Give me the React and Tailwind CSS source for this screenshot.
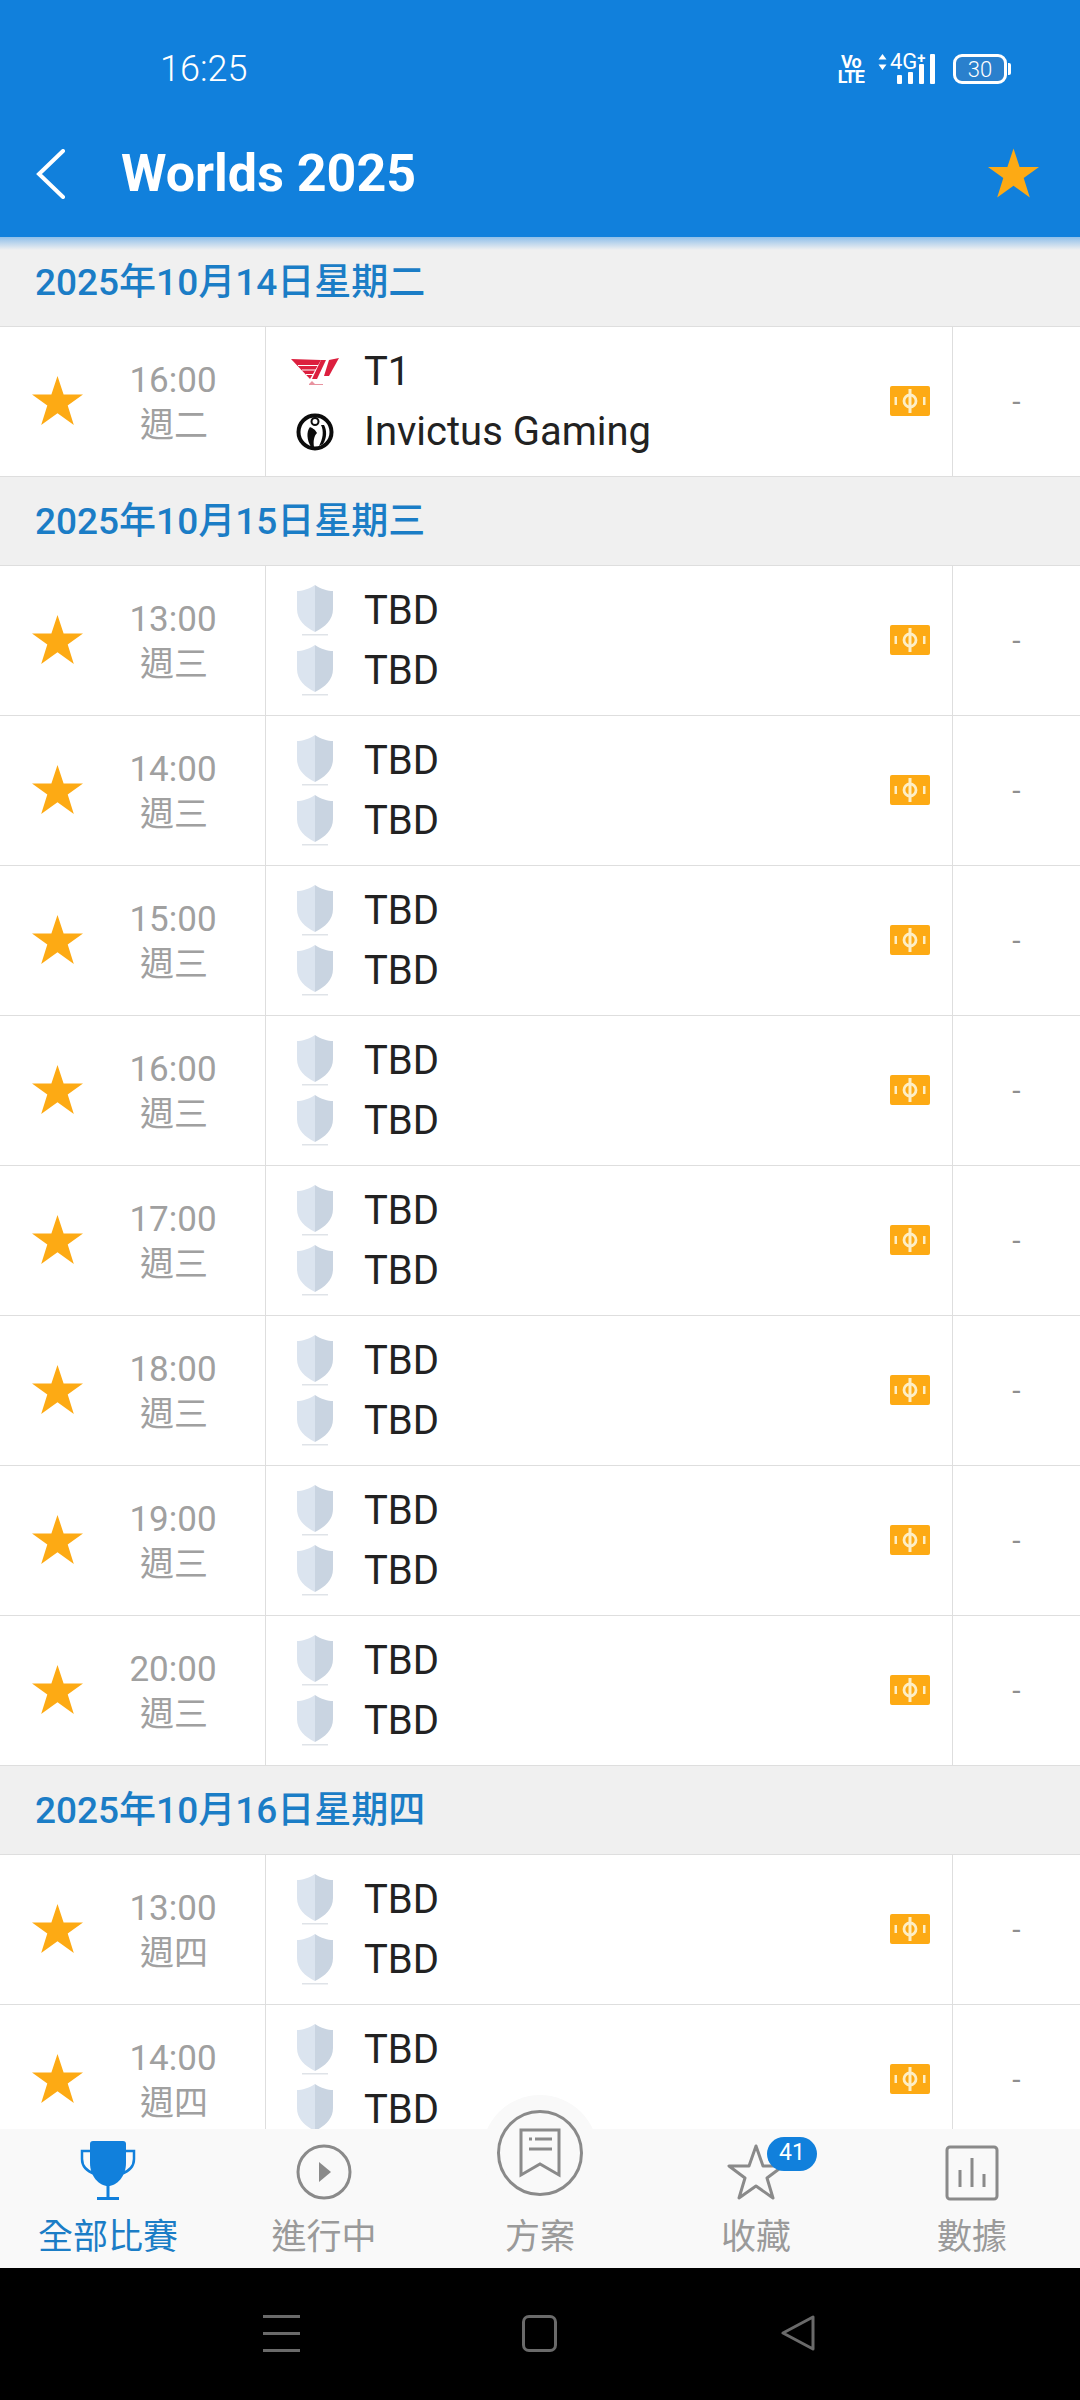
import React from 'react';

const FONT = "font-['Roboto','Noto_Sans_CJK_TC','Noto_Sans',sans-serif]";

// star used for favourites and the header
const Star = ({ className }) => (
  <svg viewBox="0 0 50 48" className={className}>
    <polygon points="25,0 31,18 50,18 35,29 41,48 25,36.500 9,48 15,29 0,18 19,18" fill="#fdaa14" />
  </svg>
);

const Shield = () => (
  <svg viewBox="0 0 38 52" className="w-[38px] h-[52px]">
    <path d="M19 0 C25 4 32 6 37 6 L37 24 C37 35 29 42 19 47 Z" fill="#c9d4e1" />
    <path d="M19 0 C13 4 6 6 1 6 L1 24 C1 35 9 42 19 47 Z" fill="#dbe4ef" />
    <rect x="6" y="49" width="26" height="1.500" fill="#dfe3e8" />
  </svg>
);

const T1Logo = () => (
  <svg viewBox="0 0 48 28" className="w-[48px] h-[28px]">
    <path d="M0 1 L30 2 L19 21 Z" fill="#dc1f3e" />
    <path d="M7 7.500 L27 7.500 M11 12 L25 12 M15 16.500 L22 16.500" stroke="#ffffff" strokeWidth="1" />
    <path d="M30 2 L35 2 L26 21 L21 21 Z" fill="#dc1f3e" />
    <path d="M38 2 L48 0 L38 18 L33 18 Z" fill="#dc1f3e" />
    <path d="M18 26 L21 23 L24 26 L32 26 L32 27 L18 27 Z" fill="#e8929f" />
  </svg>
);

const IgLogo = () => (
  <svg viewBox="0 0 38 38" className="w-[38px] h-[38px]">
    <circle cx="19" cy="19" r="16.500" fill="#fff" stroke="#0c0c0c" strokeWidth="4" />
    <circle cx="19" cy="8.500" r="3.500" fill="none" stroke="#0c0c0c" strokeWidth="2" />
    <path d="M14 14 C10 19 11 27 15 34 L18 34 C17 28 18 23 21 20 C19 16 16 15 14 14 Z" fill="#0c0c0c" />
    <path d="M25 12 C28 18 27 26 23 33 L27 31 C31 25 31 17 28 12 Z" fill="#0c0c0c" />
  </svg>
);

const Ticket = () => (
  <svg viewBox="0 0 40 30" className="w-[40px] h-[30px]">
    <rect x="0" y="0" width="40" height="30" rx="2" fill="#fdaa14" />
    <circle cx="20" cy="15" r="6" fill="none" stroke="#fdeec6" strokeWidth="2.800" />
    <rect x="18.500" y="3" width="3" height="24" fill="#fdeec6" />
    <rect x="4.500" y="11" width="2.500" height="8" fill="#fdeec6" />
    <rect x="33" y="11" width="2.500" height="8" fill="#fdeec6" />
  </svg>
);

const DateHeader = ({ children }) => (
  <div className="h-[89px] shrink-0 flex items-center pl-[35px] pt-[2px] bg-[#f0f0f0] border-b border-[#dedede] text-[37px] font-medium text-[#1b7dc6]">
    {children}
  </div>
);

const TeamLine = ({ icon, name }) => (
  <div className="h-[60px] flex items-center">
    <div className="w-[98px] flex justify-center">{icon}</div>
    <span className="text-[40px] text-[#222222]">{name}</span>
  </div>
);

const MatchRow = ({ time, day, teams }) => (
  <div className="h-[150px] shrink-0 flex bg-white border-b border-[#dedede]">
    <div className="w-[266px] shrink-0 flex items-center border-r border-[#dedede]">
      <Star className="ml-[32px] w-[51px] h-[49px] -mt-[3px]" />
      <div className="ml-[30px] w-[120px] flex flex-col items-center text-[#a0a0a0] mt-[3px]">
        <span className="text-[35px] leading-[44px]">{time}</span>
        <span className="text-[34px] leading-[44px] ml-[2px]">{day}</span>
      </div>
    </div>
    <div className="flex-1 flex items-center">
      <div className="flex-1 flex flex-col">
        {teams.map((t, i) => (
          <TeamLine key={i} icon={t.icon} name={t.name} />
        ))}
      </div>
      <div className="mr-[22px] -mt-[2px]">
        <Ticket />
      </div>
    </div>
    <div className="w-[128px] shrink-0 flex items-center justify-center border-l border-[#dedede] text-[30px] text-[#8f8f8f]">
      -
    </div>
  </div>
);

const tbd = [
  { icon: <Shield />, name: 'TBD' },
  { icon: <Shield />, name: 'TBD' },
];

const wed = ['13:00', '14:00', '15:00', '16:00', '17:00', '18:00', '19:00', '20:00'];

const StatusBar = () => (
  <div className="h-[100px] pt-[38px] flex items-center text-white">
    <span className="ml-[160px] text-[36px] font-light leading-none">16:25</span>
    <div className="ml-auto mr-[69px] flex items-center">
      <div className="flex flex-col items-center font-bold text-[18px] leading-[15px] tracking-tighter">
        <span>Vo</span>
        <span>LTE</span>
      </div>
      <div className="relative ml-[15px] w-[56px] h-[30px]">
        <svg viewBox="0 0 9 16" className="absolute -left-[1px] top-0 w-[9px] h-[16px]">
          <path d="M4.500 0 L8.500 5.500 L0.500 5.500 Z M4.500 16 L8.500 10.500 L0.500 10.500 Z" fill="#ffffff" />
        </svg>
        <span className="absolute left-[11px] -top-[3px] text-[22px] leading-[22px] whitespace-nowrap">
          4G<sup className="text-[15px] font-bold -top-[6px]">+</sup>
        </span>
        <div className="absolute right-0 bottom-0 flex items-end gap-[6px]">
          <div className="w-[5px] h-[9px] bg-white rounded-[1px]" />
          <div className="w-[5px] h-[12px] bg-white rounded-[1px]" />
          <div className="w-[5px] h-[20px] bg-white rounded-[1px]" />
          <div className="w-[5px] h-[30px] bg-white rounded-[1px]" />
        </div>
      </div>
      <div className="ml-[18px] w-[54px] h-[30px] rounded-[9px] border-[3px] border-white bg-[#2a80cd] flex items-center justify-center text-[22px] font-light">
        30
      </div>
      <div className="ml-[1px] w-[3px] h-[12px] bg-white rounded-r-[2px]" />
    </div>
  </div>
);

const BottomTab = ({ icon, label, className }) => (
  <div className={`flex flex-col items-center ${className}`}>
    <div className="h-[72px] flex items-end justify-center">{icon}</div>
    <span className="mt-[13px] text-[35px] leading-[48px] whitespace-nowrap">{label}</span>
  </div>
);

export default function App() {
  return (
    <div className={`w-[1080px] h-[2400px] flex flex-col overflow-hidden bg-white ${FONT}`}>
      <header className="relative z-20 h-[237px] shrink-0 bg-[#1180dc]">
        <StatusBar />
        <div className="h-[137px] pt-[10px] flex items-center text-white">
          <svg viewBox="0 0 30 50" className="ml-[36px] w-[30px] h-[50px]">
            <path d="M27 2 L3 25 L27 48" fill="none" stroke="#ffffff" strokeWidth="4" strokeLinecap="round" />
          </svg>
          <h1 className="ml-[55px] text-[52px] font-bold">Worlds 2025</h1>
          <Star className="ml-auto mr-[41px] w-[51px] h-[50px] -mt-[2px]" />
        </div>
        <div className="absolute left-0 right-0 top-full h-[13px] bg-gradient-to-b from-[#8fbfe9] to-[#f0f0f0]" />
      </header>

      <main className="flex-1 flex flex-col overflow-hidden pt-[1px] bg-[#f0f0f0]">
        <DateHeader>2025年10月14日星期二</DateHeader>
        <MatchRow
          time="16:00"
          day="週二"
          teams={[
            { icon: <T1Logo />, name: 'T1' },
            { icon: <IgLogo />, name: 'Invictus Gaming' },
          ]}
        />
        <DateHeader>2025年10月15日星期三</DateHeader>
        {wed.map((t) => (
          <MatchRow key={t} time={t} day="週三" teams={tbd} />
        ))}
        <DateHeader>2025年10月16日星期四</DateHeader>
        <MatchRow time="13:00" day="週四" teams={tbd} />
        <MatchRow time="14:00" day="週四" teams={tbd} />
      </main>

      <nav className="relative h-[139px] shrink-0 grid grid-cols-5 bg-[#f9f9f9] text-[#9a9a9a]">
        {/* raised centre button */}
        <div className="absolute left-[482px] -top-[34px] w-[116px] h-[116px] rounded-full bg-[#f9f9f9] flex items-center justify-center">
          <div className="w-[86px] h-[86px] rounded-full border-[3px] border-[#8a8a8a] flex items-center justify-center">
            <svg viewBox="0 0 42 50" className="w-[42px] h-[50px]">
              <path d="M2 2 L40 2 L40 47 L21 36 L2 47 Z" fill="none" stroke="#8a8a8a" strokeWidth="3" />
              <path d="M10 11 L13 11 M16 11 L33 11 M10 21 L33 21" stroke="#8a8a8a" strokeWidth="3" />
            </svg>
          </div>
        </div>

        <BottomTab
          className="text-[#1b7dc6]"
          label="全部比賽"
          icon={
            <svg viewBox="0 0 56 60" className="w-[56px] h-[60px]">
              <path d="M10 10 L2 10 L2 18 C2 27 9 31 15 33 M46 10 L54 10 L54 18 C54 27 47 31 41 33" fill="none" stroke="#1180dc" strokeWidth="2.500" />
              <path d="M13 0 L43 0 C45 0 46 1 46 3 L46 22 C46 35 37 45 28 45 C19 45 10 35 10 22 L10 3 C10 1 11 0 13 0 Z" fill="#1180dc" />
              <rect x="26.500" y="44" width="3" height="14" fill="#1180dc" />
              <rect x="17" y="56" width="22" height="3" fill="#1180dc" />
            </svg>
          }
        />
        <BottomTab
          label="進行中"
          icon={
            <svg viewBox="0 0 56 56" className="w-[56px] h-[56px] mb-[1px]">
              <circle cx="28" cy="28" r="26" fill="none" stroke="#8a8a8a" strokeWidth="3" />
              <polygon points="23,18 35,28 23,38" fill="#8a8a8a" />
            </svg>
          }
        />
        <BottomTab label="方案" icon={<div />} />
        <BottomTab
          label="收藏"
          icon={
            <div className="relative">
              <svg viewBox="0 0 58 58" className="w-[58px] h-[58px]">
                <polygon points="29,3 36,23 56,23 40,35 46,55 29,43 12,55 18,35 2,23 22,23" fill="none" stroke="#8a8a8a" strokeWidth="3" strokeLinejoin="round" />
              </svg>
              <span className="absolute left-[40px] -top-[6px] w-[50px] h-[34px] rounded-full bg-[#1180dc] text-white text-[23px] leading-[31px] text-center">
                41
              </span>
            </div>
          }
        />
        <BottomTab
          label="數據"
          icon={
            <svg viewBox="0 0 54 56" className="w-[54px] h-[56px]">
              <rect x="2" y="2" width="50" height="52" rx="3" fill="none" stroke="#8a8a8a" strokeWidth="3" />
              <path d="M15 25 L15 42 M27 13 L27 42 M39 29 L39 42" stroke="#8a8a8a" strokeWidth="3" />
            </svg>
          }
        />
      </nav>

      <footer className="h-[132px] shrink-0 bg-black flex items-start">
        <div className="ml-[263px] mt-[47px] w-[37px] h-[37px] flex flex-col justify-between">
          <div className="h-[3px] bg-[#6a6a6a]" />
          <div className="h-[3px] bg-[#6a6a6a]" />
          <div className="h-[3px] bg-[#6a6a6a]" />
        </div>
        <div className="ml-[222px] mt-[47px] w-[35px] h-[37px] rounded-[7px] border-[3px] border-[#6a6a6a]" />
        <svg viewBox="0 0 36 36" className="ml-[223px] mt-[47px] w-[36px] h-[36px]">
          <path d="M33 2 L33 34 L3 18 Z" fill="none" stroke="#6a6a6a" strokeWidth="3" strokeLinejoin="round" />
        </svg>
      </footer>
    </div>
  );
}
